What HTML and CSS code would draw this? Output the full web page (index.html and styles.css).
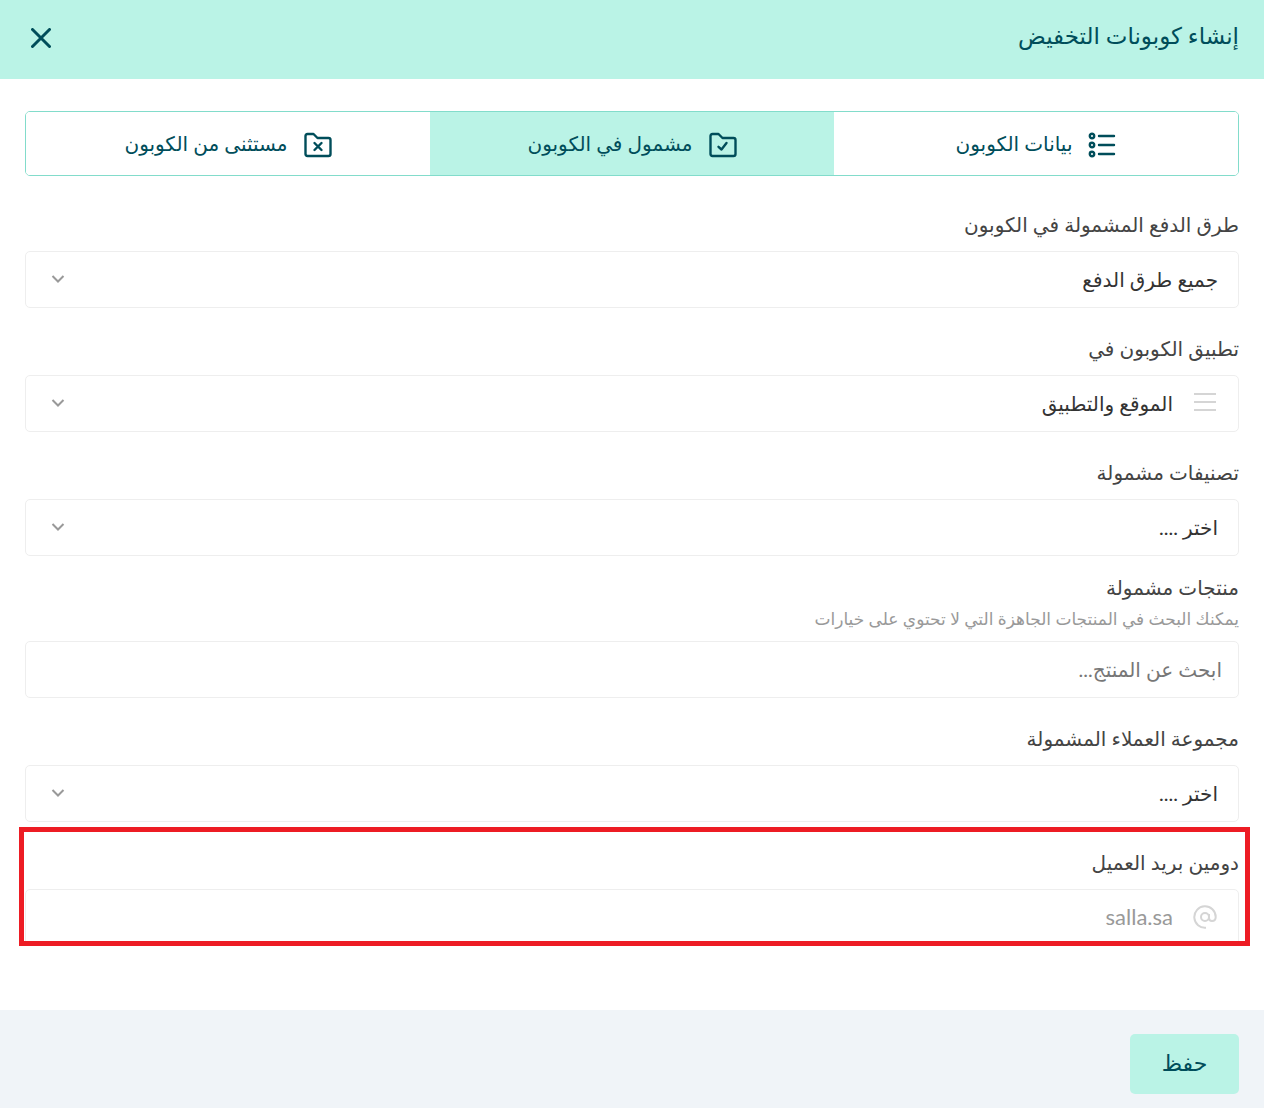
FILE: index.html
```html
<!DOCTYPE html>
<html lang="ar" dir="rtl">
<head>
    <meta charset="UTF-8">
    <meta name="viewport" content="width=device-width, initial-scale=1.0">
    <title>إنشاء كوبونات التخفيض</title>
    <link rel="stylesheet" href="styles.css">
</head>
<body>
    <div class="modal">
        <!-- Header -->
        <header class="modal-header">
            <h1>إنشاء كوبونات التخفيض</h1>
            <button type="button" class="close-btn" aria-label="إغلاق">
                <svg width="20" height="20" viewBox="0 0 20 20"><path d="M1.500 1.500 18.500 18.500M18.500 1.500 1.500 18.500"/></svg>
            </button>
        </header>

        <form class="modal-body">
            <!-- Tabs -->
            <div class="tabs">
                <button type="button" class="tab">
                    <svg width="28" height="28" viewBox="0 0 28 28">
                        <circle cx="4" cy="5" r="2.2"/><circle cx="4" cy="14" r="2.2"/><circle cx="4" cy="23" r="2.2"/>
                        <path d="M11 5H26M11 14H26M11 23H26"/>
                    </svg>
                    <span>بيانات الكوبون</span>
                </button>
                <button type="button" class="tab active">
                    <svg width="28" height="28" viewBox="0 0 28 28">
                        <path d="M1.500 5Q1.500 3 3.500 3H9.500L13.500 7H24.500Q26.500 7 26.500 9V23Q26.500 25 24.500 25H3.500Q1.500 25 1.500 23Z"/>
                        <path d="M9.500 15.800 12.500 18.500 17.500 12"/>
                    </svg>
                    <span>مشمول في الكوبون</span>
                </button>
                <button type="button" class="tab">
                    <svg width="28" height="28" viewBox="0 0 28 28">
                        <path d="M1.500 5Q1.500 3 3.500 3H9.500L13.500 7H24.500Q26.500 7 26.500 9V23Q26.500 25 24.500 25H3.500Q1.500 25 1.500 23Z"/>
                        <path d="M10.500 12 17.500 19M17.500 12 10.500 19"/>
                    </svg>
                    <span>مستثنى من الكوبون</span>
                </button>
            </div>

            <!-- Fields -->
            <div class="field">
                <label for="payment">طرق الدفع المشمولة في الكوبون</label>
                <div class="control">
                    <select id="payment"><option>جميع طرق الدفع</option></select>
                    <svg class="arrow" width="14" height="10" viewBox="0 0 14 10"><path d="M1.500 2 7 7.500 12.500 2"/></svg>
                </div>
            </div>

            <div class="field">
                <label for="platform">تطبيق الكوبون في</label>
                <div class="control has-icon">
                    <svg class="icon" width="24" height="24" viewBox="0 0 24 24"><path d="M1 3H23M1 11H23M1 19H23"/></svg>
                    <select id="platform"><option>الموقع والتطبيق</option></select>
                    <svg class="arrow" width="14" height="10" viewBox="0 0 14 10"><path d="M1.500 2 7 7.500 12.500 2"/></svg>
                </div>
            </div>

            <div class="field field-tight">
                <label for="categories">تصنيفات مشمولة</label>
                <div class="control">
                    <select id="categories"><option>اختر ....</option></select>
                    <svg class="arrow" width="14" height="10" viewBox="0 0 14 10"><path d="M1.500 2 7 7.500 12.500 2"/></svg>
                </div>
            </div>

            <div class="field">
                <label for="products">منتجات مشمولة</label>
                <p class="hint">يمكنك البحث في المنتجات الجاهزة التي لا تحتوي على خيارات</p>
                <div class="control">
                    <input type="text" id="products" placeholder="ابحث عن المنتج...">
                </div>
            </div>

            <div class="field">
                <label for="customers">مجموعة العملاء المشمولة</label>
                <div class="control">
                    <select id="customers"><option>اختر ....</option></select>
                    <svg class="arrow" width="14" height="10" viewBox="0 0 14 10"><path d="M1.500 2 7 7.500 12.500 2"/></svg>
                </div>
            </div>

            <div class="field highlight">
                <label for="domain">دومين بريد العميل</label>
                <div class="control has-icon">
                    <svg class="icon" width="24" height="24" viewBox="0 0 24 24">
                        <circle cx="12" cy="12" r="4"/>
                        <path d="M16 9V13Q16 16 19 16Q22.700 16 22.700 12A10.700 10.700 0 1 0 13 22.700"/>
                    </svg>
                    <input type="text" id="domain" class="domain-input" placeholder="salla.sa">
                </div>
            </div>
        </form>

        <!-- Footer -->
        <footer class="modal-footer">
            <button type="button" class="save-btn">حفظ</button>
        </footer>
    </div>
</body>
</html>
```
FILE: styles.css
```css
* {
    box-sizing: border-box;
}

body {
    margin: 0;
    font-family: Lato, 'DejaVu Sans', sans-serif;
    font-size: 20px;
    color: #444;
    background-color: #fff;
}

button,
input,
select {
    font-family: inherit;
    font-size: inherit;
}

button {
    cursor: pointer;
}

svg {
    fill: none;
    stroke: currentColor;
    stroke-width: 2;
    flex-shrink: 0;
}

.modal {
    display: flex;
    flex-direction: column;
    min-height: 100vh;
}

/* Header */
.modal-header {
    display: flex;
    justify-content: space-between;
    align-items: flex-start;
    padding: 14px 25px 23px;
    background-color: #baf3e6;
    color: #004d5a;
}

.modal-header h1 {
    margin: 0;
    font-size: 23px;
    font-weight: normal;
    line-height: 42px;
}

.close-btn {
    display: flex;
    padding: 14px 6px 0;
    border: none;
    background: none;
    color: inherit;
}

.close-btn svg {
    stroke-width: 3;
    stroke-linecap: round;
}

.modal-body {
    flex: 1;
    padding: 32px 25px 64px;
}

/* Tabs */
.tabs {
    display: flex;
    height: 65px;
    margin-bottom: 32px;
    border: 1px solid #82dccb;
    border-radius: 5px;
    overflow: hidden;
}

.tab {
    flex: 1;
    display: flex;
    justify-content: center;
    align-items: center;
    gap: 16px;
    padding: 3px 0 0;
    border: none;
    background-color: #fff;
    color: #004d5a;
}

.tab svg {
    stroke-width: 2.4;
    stroke-linecap: round;
    stroke-linejoin: round;
}

.tab span {
    margin-bottom: 4px;
}

.tab.active {
    background-color: #baf3e6;
}

/* Form fields */
.field {
    margin-bottom: 24px;
}

.field-tight {
    margin-bottom: 15px;
}

.field label {
    display: block;
    margin-bottom: 11px;
    line-height: 32px;
}

.hint {
    margin: -8px 0 10px;
    font-size: 17px;
    line-height: 25px;
    color: #999;
}

.control {
    position: relative;
}

.control select,
.control input {
    display: block;
    width: 100%;
    height: 57px;
    padding: 0 20px 2px;
    border: 1px solid #eee;
    border-radius: 5px;
    background-color: #fff;
    color: #333;
    line-height: 40px;
    appearance: none;
    outline: none;
}

.control input {
    padding: 0 16px 2px;
}

.control input::placeholder {
    color: #777;
    opacity: 1;
}

.control.has-icon select,
.control.has-icon input {
    padding-right: 65px;
}

.control .domain-input {
    font-size: 22px;
}

.control .domain-input::placeholder {
    color: #999;
}

.arrow {
    position: absolute;
    left: 26px;
    top: 23px;
    color: #999;
}

.icon {
    position: absolute;
    right: 22px;
    top: 16px;
    color: #d5d5d5;
}

/* Red frame around the email domain field */
.highlight {
    position: relative;
    margin-bottom: 0;
}

.highlight::after {
    content: "";
    position: absolute;
    inset: -19px -11px 0 -6px;
    border: 5px solid #ed1c24;
    pointer-events: none;
}

/* Footer */
.modal-footer {
    padding: 24px 25px 14px;
    background-color: #f0f4f8;
}

.save-btn {
    width: 109px;
    height: 60px;
    padding: 0 0 4px;
    border: none;
    border-radius: 5px;
    background-color: #baf3e6;
    color: #004d5a;
    font-size: 22px;
}
```
